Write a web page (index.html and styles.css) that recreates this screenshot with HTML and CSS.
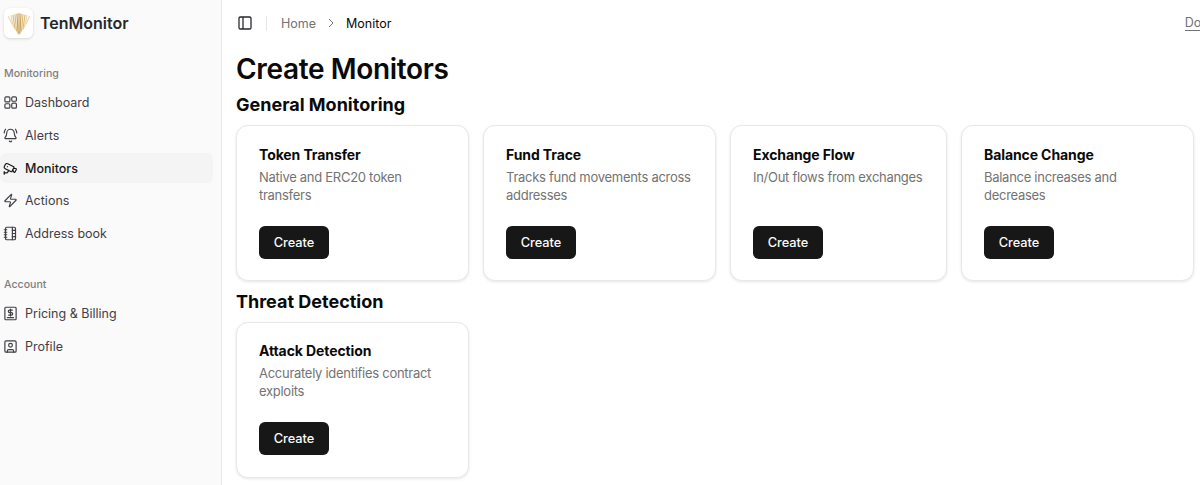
FILE: index.html
```html
<!DOCTYPE html>
<html lang="en">
<head>
<meta charset="UTF-8">
<meta name="viewport" content="width=device-width, initial-scale=1.0">
<title>Create Monitors</title>
<link rel="stylesheet" href="styles.css">
</head>
<body>
  <div class="layout">
    <aside class="sidebar">
      <div class="brand">
        <div class="brand-logo">
          <svg width="26" height="26" viewBox="0 0 26 26" fill="none" stroke-linecap="round">
            <g stroke="#ecd9ae" stroke-width="1.200">
              <path d="M2.500 6.500 6 14"/><path d="M23.500 6.500 20 14"/>
              <path d="M5 5.500 7.500 17"/><path d="M21 5.500 18.500 17"/>
            </g>
            <g stroke="#dcbd7c" stroke-width="1.200">
              <path d="M7 5 9 19"/><path d="M19 5 17 19"/>
              <path d="M9 4.500 10.500 21"/><path d="M17 4.500 15.500 21"/>
            </g>
            <g stroke="#cba35a" stroke-width="1.200">
              <path d="M11 4 12 23"/><path d="M13 3.500V24"/><path d="M15 4 14 23"/>
            </g>
          </svg>
        </div>
        <span class="brand-name">TenMonitor</span>
      </div>

      <div class="nav-label">Monitoring</div>
      <nav class="nav">
        <a class="nav-item">
          <svg class="nav-icon" viewBox="0 0 24 24"><rect x="3" y="3" width="8" height="8" rx="2"/><rect x="14" y="3" width="7.500" height="7" rx="2"/><rect x="14" y="13" width="7.500" height="8" rx="2"/><rect x="3" y="14" width="8" height="7" rx="2"/></svg>
          Dashboard
        </a>
        <a class="nav-item">
          <svg class="nav-icon" viewBox="0 0 24 24"><path d="M10.268 21a2 2 0 0 0 3.464 0"/><path d="M22 8c0-2.300-.8-4.300-2-6"/><path d="M3.262 15.326A1 1 0 0 0 4 17h16a1 1 0 0 0 .74-1.673C19.410 13.956 18 12.499 18 8A6 6 0 0 0 6 8c0 4.499-1.411 5.956-2.738 7.326"/><path d="M4 2C2.800 3.700 2 5.700 2 8"/></svg>
          Alerts
        </a>
        <a class="nav-item active">
          <svg class="nav-icon" viewBox="0 0 24 24"><path d="M16.750 12h3.632a1 1 0 0 1 .894 1.447l-2.034 4.069a1 1 0 0 1-1.708.134l-2.124-2.970"/><path d="M17.106 9.053a1 1 0 0 1 .447 1.341l-3.106 6.211a1 1 0 0 1-1.342.447L3.610 12.300a2.920 2.920 0 0 1-1.300-3.910L3.690 5.600a2.920 2.920 0 0 1 3.920-1.300z"/><path d="M2 19h3.760a2 2 0 0 0 1.800-1.100L9 15"/><path d="M2 21v-4"/><path d="M7 9h.01"/></svg>
          Monitors
        </a>
        <a class="nav-item">
          <svg class="nav-icon" viewBox="0 0 24 24"><path d="M4 14a1 1 0 0 1-.78-1.630l9.900-10.200a.5.5 0 0 1 .86.46l-1.920 6.020A1 1 0 0 0 13 10h7a1 1 0 0 1 .78 1.630l-9.900 10.200a.5.5 0 0 1-.86-.46l1.920-6.020A1 1 0 0 0 11 14z"/></svg>
          Actions
        </a>
        <a class="nav-item">
          <svg class="nav-icon" viewBox="0 0 24 24"><path d="M2 6h4"/><path d="M2 10h4"/><path d="M2 14h4"/><path d="M2 18h4"/><rect x="4" y="2" width="16" height="20" rx="2"/><path d="M15 2v20"/><path d="M15 7h5"/><path d="M15 12h5"/><path d="M15 17h5"/></svg>
          Address book
        </a>
      </nav>

      <div class="nav-label nav-label-account">Account</div>
      <nav class="nav">
        <a class="nav-item">
          <svg class="nav-icon" viewBox="0 0 24 24"><rect x="3" y="2" width="18" height="20" rx="1.500"/><path d="M15 6.500h-4.500a2 2 0 0 0 0 4h3a2 2 0 0 1 0 4H9"/><path d="M12 5v11"/><path d="M7 18.500h10"/></svg>
          Pricing &amp; Billing
        </a>
        <a class="nav-item">
          <svg class="nav-icon" viewBox="0 0 24 24"><rect x="3" y="3" width="18" height="18" rx="2"/><circle cx="12" cy="10" r="3"/><path d="M7 21v-2a2 2 0 0 1 2-2h6a2 2 0 0 1 2 2v2"/></svg>
          Profile
        </a>
      </nav>
    </aside>

    <main class="content">
      <header class="topbar">
        <svg class="toggle" width="16" height="16" viewBox="0 0 24 24"><rect x="3" y="3" width="18" height="18" rx="2"/><path d="M9 3v18"/></svg>
        <span class="topbar-sep"></span>
        <span class="crumb">Home</span>
        <svg class="crumb-arrow" width="10" height="10" viewBox="0 0 10 10"><path d="M3 1l4 4-4 4"/></svg>
        <span class="crumb crumb-current">Monitor</span>
        <a class="docs">Docs</a>
      </header>

      <h1 class="page-title">Create Monitors</h1>

      <h2 class="section-title">General Monitoring</h2>
      <div class="cards">
        <div class="card">
          <h3>Token Transfer</h3>
          <p>Native and ERC20 token transfers</p>
          <button type="button">Create</button>
        </div>
        <div class="card">
          <h3>Fund Trace</h3>
          <p>Tracks fund movements across addresses</p>
          <button type="button">Create</button>
        </div>
        <div class="card">
          <h3>Exchange Flow</h3>
          <p>In/Out flows from exchanges</p>
          <button type="button">Create</button>
        </div>
        <div class="card">
          <h3>Balance Change</h3>
          <p>Balance increases and decreases</p>
          <button type="button">Create</button>
        </div>
      </div>

      <h2 class="section-title">Threat Detection</h2>
      <div class="cards cards-threat">
        <div class="card">
          <h3>Attack Detection</h3>
          <p>Accurately identifies contract exploits</p>
          <button type="button">Create</button>
        </div>
      </div>
    </main>
  </div>
</body>
</html>
```

FILE: styles.css
```css
* {
  box-sizing: border-box;
}

html, body {
  height: 100%;
  overflow: hidden;
}

body {
  margin: 0;
  background: #FFF;
  color: #0A0A0A;
  font-family: Inter, "Liberation Sans", sans-serif;
}

.layout {
  display: flex;
  height: 100%;
}

.sidebar {
  flex: 0 0 222px;
  padding: 8px 8px 0 0;
  background: #FAFAFA;
  border-right: 1px solid #E8E8E8;
}

.brand {
  display: flex;
  align-items: center;
  gap: 7px;
  padding-left: 4px;
}

.brand-logo {
  display: flex;
  align-items: center;
  justify-content: center;
  width: 29px;
  height: 30px;
  background: #FFF;
  border-radius: 6px;
  box-shadow: 0 1px 3px rgba(0, 0, 0, 0.15);
}

.brand-name {
  font-size: 16px;
  font-weight: 600;
  color: #27272A;
}

.nav-label {
  margin-top: 28px;
  padding-left: 4px;
  font-size: 10.600px;
  line-height: 16px;
  font-weight: 500;
  color: #808080;
}

.nav-label-account {
  margin-top: 28px;
}

.nav {
  display: flex;
  flex-direction: column;
  gap: 2.700px;
  margin-top: 5.800px;
}

.nav-item {
  display: flex;
  align-items: center;
  gap: 7px;
  height: 30px;
  padding-left: 3px;
  border-radius: 6px;
  font-size: 12.500px;
  color: #3F3F46;
}

.nav-item.active {
  background: #F4F4F5;
  color: #18181B;
  font-weight: 500;
}

.nav-icon {
  flex: none;
  width: 15px;
  height: 15px;
  fill: none;
  stroke: currentColor;
  stroke-width: 1.900;
  stroke-linecap: round;
  stroke-linejoin: round;
}

.content {
  flex: 1;
  min-width: 0;
  padding-left: 14px;
  overflow: hidden;
}

.topbar {
  display: flex;
  align-items: center;
  height: 46px;
  font-size: 12.500px;
}

.toggle {
  margin-left: 1px;
  fill: none;
  stroke: #27272A;
  stroke-width: 1.900;
}

.topbar-sep {
  width: 1px;
  height: 15px;
  margin: 0 14px 0 13px;
  background: #E5E5E5;
}

.crumb {
  color: #737373;
}

.crumb-current {
  color: #0A0A0A;
}

.crumb-arrow {
  margin: 0 10px 0 10px;
  fill: none;
  stroke: #737373;
  stroke-width: 1;
}

.docs {
  margin-left: auto;
  margin-right: -15px;
  color: #71717A;
  font-size: 12.500px;
  border-bottom: 1px solid #71717A;
}

.page-title {
  margin: 0;
  font-size: 28px;
  line-height: 46px;
  font-weight: 600;
  letter-spacing: -0.350px;
}

.section-title {
  margin: 0;
  font-size: 18px;
  line-height: 26px;
  font-weight: 650;
}

.cards {
  display: grid;
  grid-template-columns: 233px 233px 217px 233px;
  gap: 14px;
  margin: 7px 0 8px;
}

.card {
  display: flex;
  flex-direction: column;
  height: 156px;
  padding: 20px 20px 20px 22px;
  background: #FFF;
  border: 1px solid #E8E8E8;
  border-radius: 12px;
  box-shadow: 0 1px 3px rgba(0, 0, 0, 0.1);
}

.cards-threat .card {
  padding-top: 19px;
  padding-bottom: 21px;
}

.card h3 {
  margin: 0;
  font-size: 14px;
  line-height: 18px;
  font-weight: 650;
  letter-spacing: -0.100px;
}

.card p {
  margin: 4px 0 0;
  font-size: 13px;
  line-height: 18px;
  letter-spacing: -0.280px;
  color: #737373;
}

.card button {
  margin-top: auto;
  width: 70px;
  height: 33px;
  margin-bottom: 1px;
  padding-bottom: 2px;
  background: #171717;
  color: #FAFAFA;
  border: none;
  border-radius: 6px;
  font-family: inherit;
  font-size: 12.800px;
  font-weight: 500;
}
```
